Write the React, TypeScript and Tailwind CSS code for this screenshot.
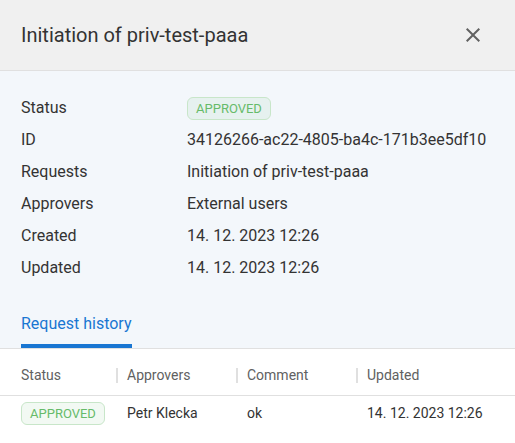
import React from "react";

function Badge() {
  return (
    <span className="inline-flex h-[23px] items-center rounded-[6px] border border-[#c8e6c9] bg-[rgba(76,175,80,0.07)] px-[8px] text-[13px] leading-none text-[#66bb6a]">
      APPROVED
    </span>
  );
}

export default function App() {
  const details: [string, React.ReactNode][] = [
    ["Status", <Badge />],
    ["ID", "34126266-ac22-4805-ba4c-171b3ee5df10"],
    ["Requests", "Initiation of priv-test-paaa"],
    ["Approvers", "External users"],
    ["Created", "14. 12. 2023 12:26"],
    ["Updated", "14. 12. 2023 12:26"],
  ];
  return (
    <div className="w-[515px] h-[443px] overflow-hidden bg-white font-['Roboto',sans-serif] text-[#212121]">
      <div className="flex h-[71px] items-center justify-between border-b border-[#e0e0e0] bg-[#f0f0f0] pl-[21px] pr-[30px]">
        <div className="text-[20px] text-[#333]">Initiation of priv-test-paaa</div>
        <svg width="24" height="24" viewBox="0 0 24 24" className="text-[#616161]">
          <path
            fill="currentColor"
            d="M19 6.41L17.59 5 12 10.59 6.41 5 5 6.41 10.59 12 5 17.59 6.41 19 12 13.41 17.59 19 19 17.59 13.41 12z"
          />
        </svg>
      </div>
      <div className="border-b border-[#e0e0e0] bg-[#f3f7fb]">
        <div className="px-[21px] pt-[21px]">
          {details.map(([k, v]) => (
            <div key={k} className="flex h-[32px] items-center text-[16px] text-[#333]">
              <div className="w-[166px]">{k}</div>
              <div>{v}</div>
            </div>
          ))}
        </div>
        <div className="mt-[16px] flex px-[21px]">
          <div className="flex h-[48px] flex-col justify-end">
            <div className="pb-[8px] text-[16px] text-[#1976d2]">Request history</div>
            <div className="h-[4px] bg-[#1976d2]" />
          </div>
        </div>
      </div>
      <div className="grid grid-cols-[117px_120px_120px_1fr] border-b border-[#e0e0e0] h-[47px] pt-[6px] items-center text-[14px] text-[#616161]">
        <div className="pl-[21px]">Status</div>
        {["Approvers", "Comment", "Updated"].map((h) => (
          <div key={h} className="flex items-center">
            <div className="h-[15px] w-[2px] bg-[#e0e0e0] -ml-[1px]" />
            <div className="pl-[9px]">{h}</div>
          </div>
        ))}
      </div>
      <div className="grid grid-cols-[117px_120px_120px_1fr] h-[34px] items-center text-[14px] text-[#333]">
        <div className="pl-[21px]"><Badge /></div>
        <div className="pl-[10px]">Petr Klecka</div>
        <div className="pl-[10px]">ok</div>
        <div className="pl-[10px]">14. 12. 2023 12:26</div>
      </div>
    </div>
  );
}
